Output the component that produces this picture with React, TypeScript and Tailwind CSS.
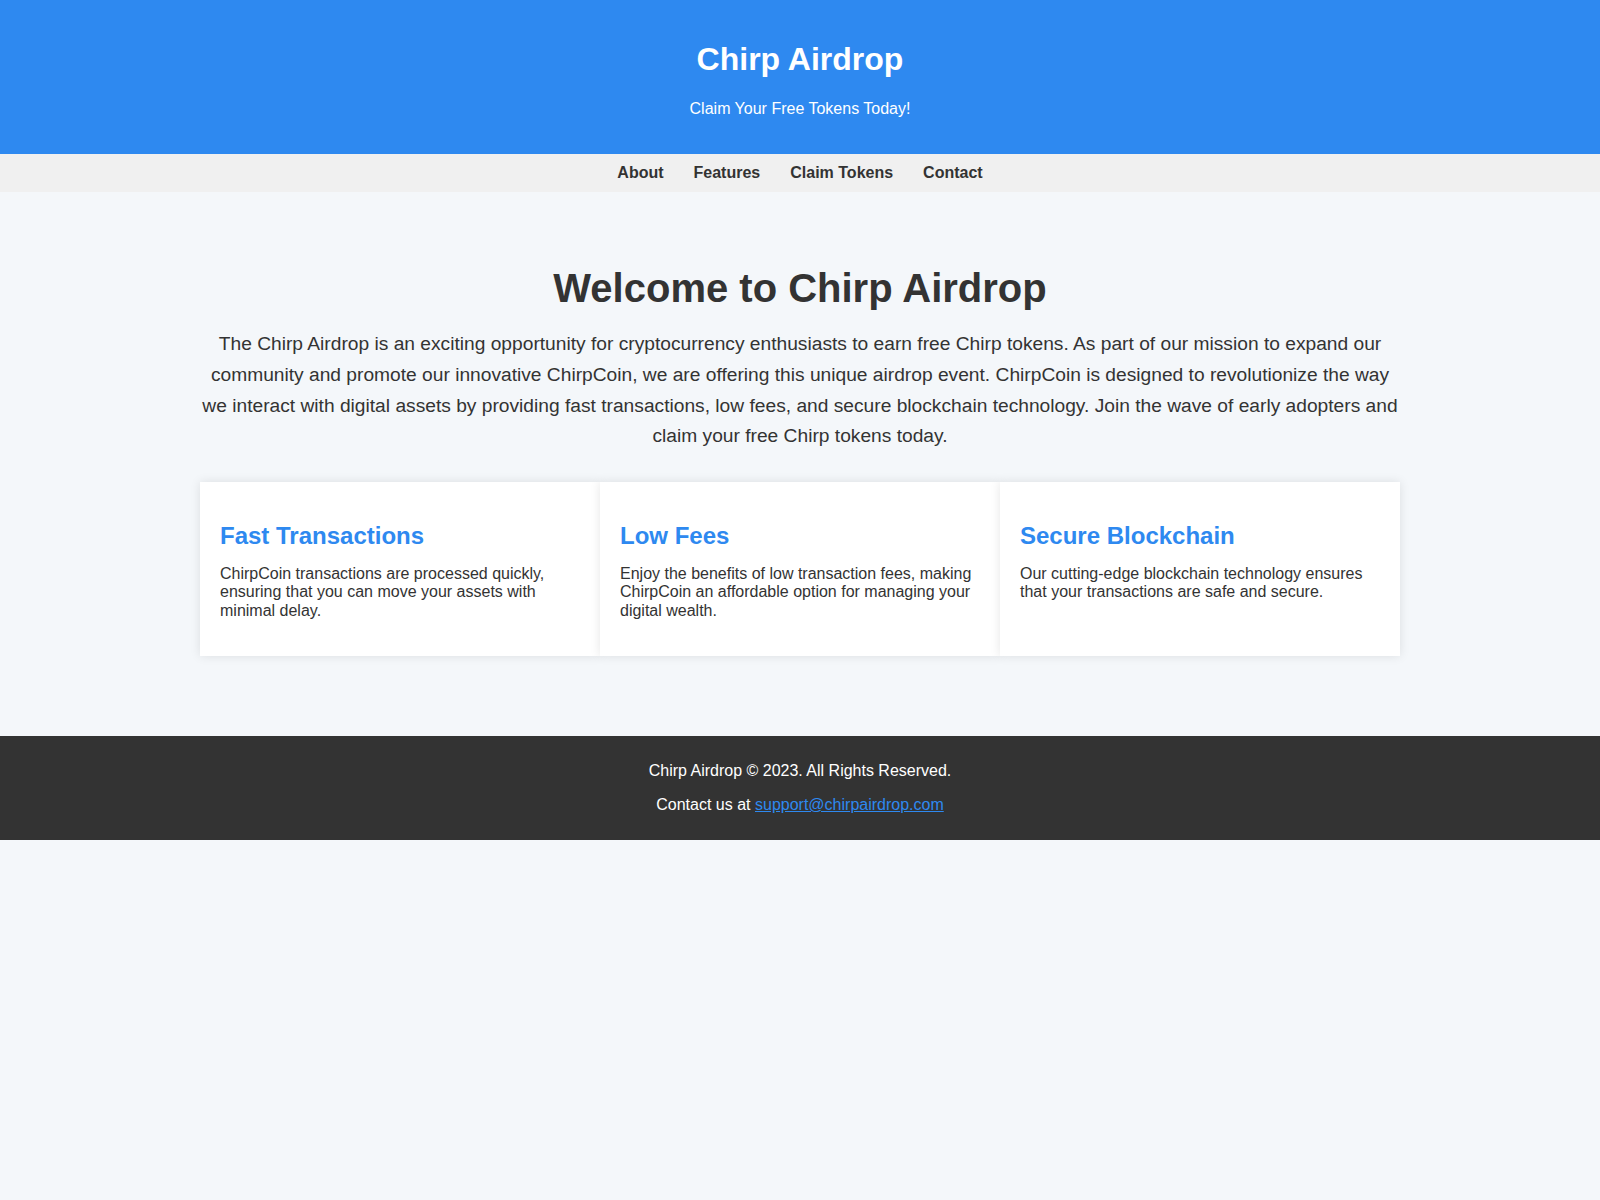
export default function App() {
  const features = [
    {
      title: "Fast Transactions",
      text: "ChirpCoin transactions are processed quickly, ensuring that you can move your assets with minimal delay.",
    },
    {
      title: "Low Fees",
      text: "Enjoy the benefits of low transaction fees, making ChirpCoin an affordable option for managing your digital wealth.",
    },
    {
      title: "Secure Blockchain",
      text: "Our cutting-edge blockchain technology ensures that your transactions are safe and secure.",
    },
  ];

  return (
    <div
      className="min-h-[1200px] bg-[#f4f7fa] text-[#333]"
      style={{ fontFamily: '"Liberation Sans", Arial, sans-serif' }}
    >
      <header className="bg-[#2e89f0] px-5 py-5 text-center text-white">
        <h1 className="my-[21.44px] text-[32px] font-bold leading-[36.8px]">Chirp Airdrop</h1>
        <p className="mb-4 text-base leading-[18.4px]">Claim Your Free Tokens Today!</p>
      </header>

      <nav className="flex justify-center bg-[#f0f0f0] py-2.5">
        {["About", "Features", "Claim Tokens", "Contact"].map((item) => (
          <a key={item} href="#" className="mx-[15px] text-base font-bold leading-[18px] text-[#333]">
            {item}
          </a>
        ))}
      </nav>

      <main className="mx-auto max-w-[1200px] px-0 pb-20 pt-10 text-center">
        <h2 className="mt-[33px] mb-[18px] text-[40px] font-bold leading-[46px]">Welcome to Chirp Airdrop</h2>
        <p className="text-[19.2px] leading-[30.72px]">
          The Chirp Airdrop is an exciting opportunity for cryptocurrency enthusiasts to earn free Chirp tokens. As
          part of our mission to expand our community and promote our innovative ChirpCoin, we are offering this
          unique airdrop event. ChirpCoin is designed to revolutionize the way we interact with digital assets by
          providing fast transactions, low fees, and secure blockchain technology. Join the wave of early adopters
          and claim your free Chirp tokens today.
        </p>

        <div className="mt-[30px] flex text-left">
          {features.map((f) => (
            <div key={f.title} className="flex-1 bg-white p-5 shadow-[0_0_10px_rgba(0,0,0,0.1)]">
              <h3 className="mt-5 mb-4 text-2xl font-bold leading-[27px] text-[#2e89f0]">{f.title}</h3>
              <p className="mb-4 text-base leading-[18.4px]">{f.text}</p>
            </div>
          ))}
        </div>
      </main>

      <footer className="bg-[#333] px-5 py-2.5 text-center text-white">
        <p className="my-4 text-base leading-[18px]">Chirp Airdrop © 2023. All Rights Reserved.</p>
        <p className="my-4 text-base leading-[18px]">
          Contact us at{" "}
          <a href="#" className="text-[#2e89f0] underline">
            support@chirpairdrop.com
          </a>
        </p>
      </footer>
    </div>
  );
}
